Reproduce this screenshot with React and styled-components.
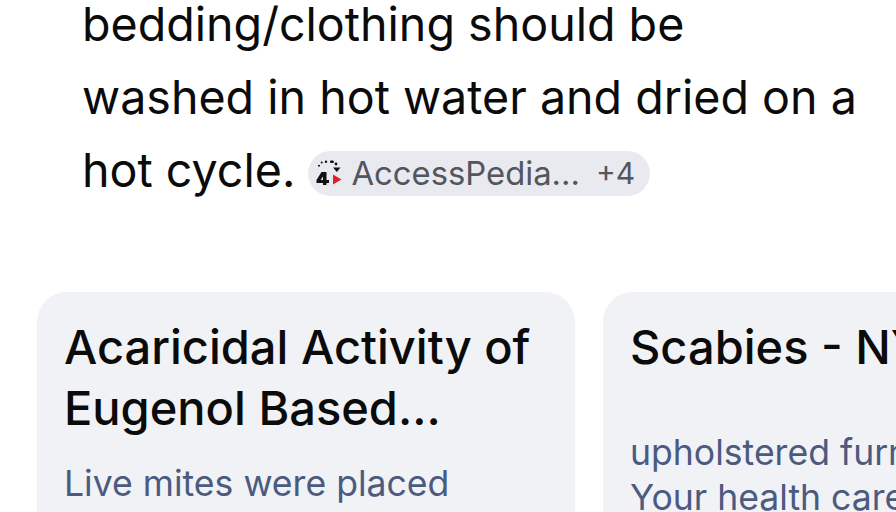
import styled, { createGlobalStyle } from 'styled-components'

const GlobalStyle = createGlobalStyle`
  html, body {
    margin: 0;
    background: #fff;
  }
  body {
    font-family: Inter, Roboto, sans-serif;
  }
`

const Page = styled.div`
  width: 896px;
  height: 512px;
  overflow: hidden;
  background: #fff;
`

const Answer = styled.p`
  margin: -12px 0 0;
  padding-left: 82px;
  font-size: 46.6px;
  line-height: 73px;
  color: #0b0b0b;
  white-space: nowrap;
`

const SourceChip = styled.span`
  display: inline-flex;
  align-items: center;
  height: 45px;
  padding: 0 15px 0 7px;
  border-radius: 23px;
  background: #e9eaef;
  color: #53565c;
  font-size: 32.8px;
  line-height: 45px;
`

const ChipLabel = styled.span`
  margin-left: 8px;
`

const ChipCount = styled.span`
  margin-left: 16px;
  font-size: 30px;
`

const Cards = styled.div`
  display: flex;
  gap: 28px;
  margin-top: 85px;
  padding-left: 37px;
`

const Card = styled.article`
  flex: none;
  width: 538px;
  height: 300px;
  box-sizing: border-box;
  padding: 24px 27px;
  border-radius: 30px;
  background: #f0f2f6;
  overflow: hidden;
`

const CardTitle = styled.h3`
  margin: 0;
  font-size: 47px;
  font-weight: 500;
  line-height: 61px;
  color: #0b0b0b;
  white-space: pre;
`

const CardText = styled.p`
  margin: ${({ $gap }) => $gap}px 0 0;
  font-size: 35.6px;
  line-height: 45px;
  color: #4c5a80;
  white-space: pre;
`

// site logo: dotted arc, black and red triangles, and the "4" shape
function SiteLogo() {
  return (
    <svg width="28" height="28" viewBox="0 0 28 28">
      <g fill="#111">
        <circle cx="4" cy="6.7" r="1" />
        <circle cx="6.7" cy="3.5" r="1" />
        <circle cx="11" cy="2.7" r="1.2" />
        <rect x="15" y="1.4" width="3.8" height="2.6" rx="1" />
        <circle cx="21" cy="5" r="1.4" />
        <path d="M18 8.5h7.5l-3.7 4.5z" />
        <path
          d="M6.5 13h5v8h2.5v3h-2.5v2H8v-2H1.5v-3zM8 17.5l-2.4 3.5H8z"
          fillRule="evenodd"
        />
      </g>
      <path d="M18 15.5l8.5 5-8.5 5z" fill="#e0202c" />
    </svg>
  )
}

export default function App() {
  return (
    <Page>
      <GlobalStyle />
      <Answer>
        bedding/clothing should be
        <br />
        washed in hot water and dried on a
        <br />
        hot cycle.{' '}
        <SourceChip>
          <SiteLogo />
          <ChipLabel>AccessPedia...</ChipLabel>
          <ChipCount>+4</ChipCount>
        </SourceChip>
      </Answer>
      <Cards>
        <Card>
          <CardTitle>{'Acaricidal Activity of\nEugenol Based...'}</CardTitle>
          <CardText $gap={23}>{'Live mites were placed'}</CardText>
        </Card>
        <Card>
          <CardTitle>{'Scabies - NYC Health'}</CardTitle>
          <CardText $gap={53}>{'upholstered furniture\nYour health care'}</CardText>
        </Card>
      </Cards>
    </Page>
  )
}
